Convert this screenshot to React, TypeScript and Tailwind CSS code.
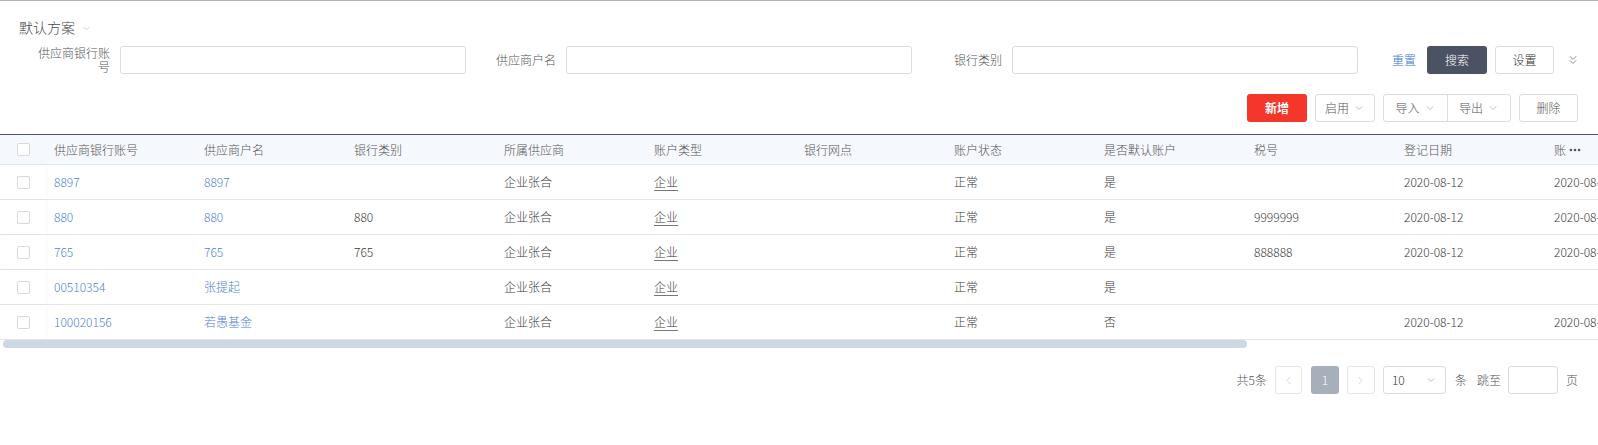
import { ChevronDown, ChevronLeft, ChevronRight, ChevronsDown, MoreHorizontal } from "lucide-react";

const columns = [
  "供应商银行账号",
  "供应商户名",
  "银行类别",
  "所属供应商",
  "账户类型",
  "银行网点",
  "账户状态",
  "是否默认账户",
  "税号",
  "登记日期",
  "账户变更日期",
];

type Row = string[];

const rows: Row[] = [
  ["8897", "8897", "", "企业张合", "企业", "", "正常", "是", "", "2020-08-12", "2020-08-12"],
  ["880", "880", "880", "企业张合", "企业", "", "正常", "是", "9999999", "2020-08-12", "2020-08-12"],
  ["765", "765", "765", "企业张合", "企业", "", "正常", "是", "888888", "2020-08-12", "2020-08-12"],
  ["00510354", "张提起", "", "企业张合", "企业", "", "正常", "是", "", "", ""],
  ["100020156", "若愚基金", "", "企业张合", "企业", "", "正常", "否", "", "2020-08-12", "2020-08-12"],
];

function Checkbox() {
  return <div className="w-[13px] h-[13px] border border-[#d9d9d9] rounded-[2px] bg-white" />;
}

function FilterField({ label }: { label: string }) {
  return (
    <div className="flex items-center w-[446px] pl-[10px]">
      <div className="w-[80px] text-right text-[12px] leading-[14px] text-[#555]">{label}</div>
      <input className="ml-[10px] w-[346px] h-[28px] border border-[#dcdcdc] rounded-[3px] bg-white outline-none" />
    </div>
  );
}

function DropButton({ label }: { label: string }) {
  return (
    <div className="flex items-center justify-center gap-[4px] h-full">
      <span>{label}</span>
      <ChevronDown size={12} strokeWidth={1.5} className="text-[#aaa]" />
    </div>
  );
}

function Cell({ col, value }: { col: number; value: string }) {
  let cls = "text-[#3a3a3a]";
  if (col === 0 || col === 1) cls = "text-[#4f7fd6]";
  return (
    <div className="w-[150px] shrink-0 px-[8px] flex items-center">
      <span
        className={`${cls} ${col === 4 ? "underline underline-offset-3 decoration-1 decoration-[#777]" : ""}`}
      >
        {value}
      </span>
    </div>
  );
}

export default function App() {
  return (
    <div
      className="w-[1598px] h-[445px] bg-white border-t border-[#b0b0b0] overflow-hidden font-light"
      style={{ fontFamily: '"Noto Sans CJK SC", "Noto Sans", sans-serif' }}
    >
      {/* scheme selector */}
      <div className="pt-[16px] pl-[19px] flex items-center gap-[6px] h-[36px]">
        <span className="text-[14px] leading-[20px] text-[#444]">默认方案</span>
        <ChevronDown size={11} strokeWidth={1.5} className="text-[#bbb] mt-[2px]" />
      </div>

      {/* filter row */}
      <div className="mt-[9px] pl-[20px] flex items-center h-[28px]">
        <FilterField label="供应商银行账号" />
        <FilterField label="供应商户名" />
        <FilterField label="银行类别" />
        <span className="ml-[34px] text-[12px] text-[#3a78d4]">重置</span>
        <button className="ml-[11px] w-[60px] h-[28px] rounded-[3px] bg-[#4b5264] text-white text-[12px]">搜索</button>
        <button className="ml-[8px] w-[59px] h-[28px] rounded-[3px] border border-[#dcdcdc] bg-white text-[#333] text-[12px]">设置</button>
        <ChevronsDown size={14} strokeWidth={1.5} className="ml-[12px] text-[#777]" />
      </div>

      {/* action buttons */}
      <div className="mt-[20px] pr-[20px] flex justify-end items-center gap-[8px] h-[28px] text-[12px]">
        <button className="w-[60px] h-[28px] rounded-[3px] bg-[#f4372a] text-white font-bold">新增</button>
        <button className="w-[60px] h-[28px] rounded-[3px] border border-[#dcdcdc] bg-white text-[#555]">
          <DropButton label="启用" />
        </button>
        <div className="flex h-[28px] rounded-[3px] border border-[#dcdcdc] bg-white text-[#555]">
          <div className="w-[63px]">
            <DropButton label="导入" />
          </div>
          <div className="w-px bg-[#dcdcdc]" />
          <div className="w-[62px]">
            <DropButton label="导出" />
          </div>
        </div>
        <button className="w-[59px] h-[28px] rounded-[3px] border border-[#dcdcdc] bg-white text-[#555]">删除</button>
      </div>

      {/* table */}
      <div className="mt-[12px] relative overflow-hidden text-[12px]">
        <div className="w-[1696px]">
          <div className="flex h-[31px] bg-[#f5f8fc] border-t border-[#4e5866] border-b border-b-[#e4e8ee] text-[#555]">
            <div className="w-[46px] shrink-0 flex items-center justify-center">
              <Checkbox />
            </div>
            {columns.map((c) => (
              <div key={c} className="w-[150px] shrink-0 px-[8px] flex items-center">
                {c}
              </div>
            ))}
          </div>
          {rows.map((r, i) => (
            <div key={i} className="flex h-[35px] border-b border-[#e6e6e6]">
              <div className="w-[46px] shrink-0 flex items-center justify-center shadow-[1px_0_2px_rgba(0,0,0,0.03)]">
                <Checkbox />
              </div>
              {r.map((v, j) => (
                <Cell key={j} col={j} value={v} />
              ))}
            </div>
          ))}
        </div>
        <div className="absolute right-0 top-[1px] w-[32px] h-[29px] bg-[#f5f8fc] flex items-center justify-start pl-[2px]">
          <MoreHorizontal size={14} strokeWidth={2.5} className="text-[#555]" />
        </div>
        <div className="ml-[3px] w-[1244px] h-[8px] rounded-[4px] bg-[#cdd8e5]" />
      </div>

      {/* pagination */}
      <div className="mt-[18px] pr-[20px] flex justify-end items-center h-[28px] text-[12px] text-[#555]">
        <span className="mr-[8px]">共5条</span>
        <div className="w-[27px] h-[28px] border border-[#e6e6e6] rounded-[3px] flex items-center justify-center text-[#ccc]">
          <ChevronLeft size={13} strokeWidth={1.5} />
        </div>
        <div className="ml-[9px] w-[28px] h-[28px] rounded-[3px] bg-[#a7afba] text-white flex items-center justify-center">1</div>
        <div className="ml-[8px] w-[28px] h-[28px] border border-[#e6e6e6] rounded-[3px] flex items-center justify-center text-[#ccc]">
          <ChevronRight size={13} strokeWidth={1.5} />
        </div>
        <div className="ml-[8px] w-[63px] h-[28px] border border-[#dcdcdc] rounded-[3px] flex items-center justify-between pl-[8px] pr-[8px] text-[#333]">
          <span>10</span>
          <ChevronDown size={12} strokeWidth={1.5} className="text-[#aaa]" />
        </div>
        <span className="ml-[9px]">条</span>
        <span className="ml-[10px]">跳至</span>
        <div className="ml-[7px] w-[50px] h-[28px] border border-[#dcdcdc] rounded-[3px]" />
        <span className="ml-[8px]">页</span>
      </div>
    </div>
  );
}
